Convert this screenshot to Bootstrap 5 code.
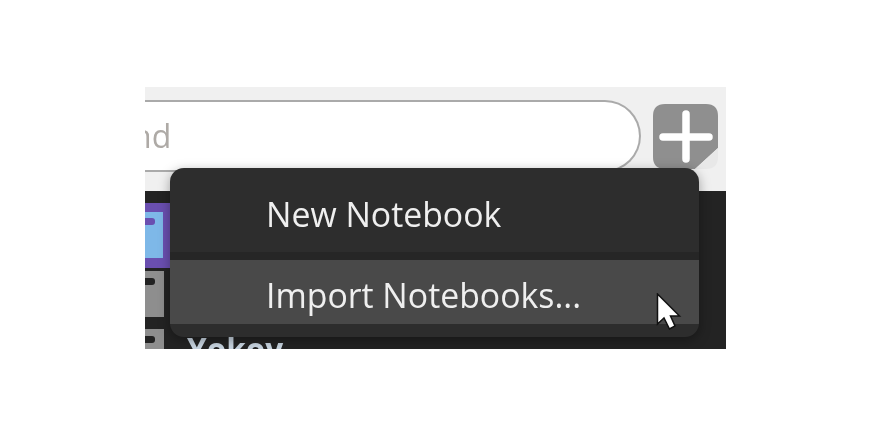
<!DOCTYPE html>
<html lang="en">
<head>
<meta charset="utf-8">
<title>Notebook menu</title>
<link rel="stylesheet" href="https://cdn.jsdelivr.net/npm/bootstrap@5.3.0/dist/css/bootstrap.min.css">
<style>
html,body{height:437px;overflow:hidden;background:#fff}
.stage{margin:87px 0 0 145px;width:581px;height:262px;position:relative;overflow:hidden;font-family:"Open Sans","Noto Sans",sans-serif;background:#232323;filter:blur(.45px)}
.topbar{height:104px;background:#f0f0f0;padding:13px 8px 0 0;align-items:flex-start}
.searchbox{flex:1;height:72px;background:#fff;border:2.5px solid #aaa;border-left:0;border-radius:0 36px 36px 0;color:#aeaaa6;font-size:32px;font-weight:400;line-height:67px;margin-right:12px;overflow:hidden;text-indent:-13px;white-space:nowrap}
.plusbtn{width:65px;height:65px;flex:none;display:block;margin-top:4px}
.sidebar{width:25px;position:absolute;left:0;top:103px;bottom:0}
.thumb-a{position:absolute;left:0;top:13px;width:25px;height:65px;background:#6a4fb0}
.thumb-a i{position:absolute;left:0;top:9px;width:18px;height:46px;background:#7eb8e8}
.thumb-a b{position:absolute;left:0;top:15px;width:10px;height:7px;background:#6a4fb0;border-radius:0 3px 3px 0}
.thumb-b{position:absolute;left:0;width:19px;background:#8e8e8e}
.thumb-b b{position:absolute;left:0;top:7px;width:10px;height:7px;background:#222;border-radius:0 3px 3px 0}
.t1{top:81px;height:46px}
.t2{top:139px;height:30px}
.peek{position:absolute;left:42px;top:244px;font-size:31.500px;font-weight:700;color:#c9d6e2;line-height:36px;margin:0}
.popup{position:absolute;left:25px;top:81px;width:529px;height:169px;background:#2d2d2d;border-radius:14px;box-shadow:0 3px 12px rgba(0,0,0,.35);overflow:hidden;padding:0;margin:0}
.popup .list-group-item{background:transparent;border:0;color:#efefef;font-size:33.8px;line-height:44px;padding:0 0 0 96px;border-radius:0}
.item-new{height:84px;padding-top:24px!important}
.sep{height:8px;background:#262626}
.item-imp{height:64px;background:#494949!important;padding-top:13px!important}
.cursor{position:absolute;left:511px;top:206px;width:26px;height:38px}
</style>
</head>
<body>
<div class="stage">
  <div class="topbar d-flex">
    <div class="searchbox">nd</div>
    <svg class="plusbtn" viewBox="0 0 65 65" aria-label="Add">
      <path d="M12 0H53Q65 0 65 12V44L42 65H12Q0 65 0 53V12Q0 0 12 0Z" fill="#8f8f8f"/>
      <path d="M65 44V53Q65 65 53 65H42Z" fill="#e8e8e8"/>
      <path d="M33 10V55M10 33H56" stroke="#fff" stroke-width="7.5" stroke-linecap="round" fill="none"/>
    </svg>
  </div>
  <div class="sidebar">
    <div class="thumb-a"><i></i><b></b></div>
    <div class="thumb-b t1"><b></b></div>
    <div class="thumb-b t2"><b></b></div>
  </div>
  <p class="peek">Yokoy</p>
  <div class="popup list-group">
    <div class="list-group-item item-new">New Notebook</div>
    <div class="sep"></div>
    <div class="list-group-item item-imp">Import Notebooks...</div>
  </div>
  <svg class="cursor" viewBox="0 0 26 38" aria-hidden="true">
    <path d="M1.5 1V31L8 25L13.500 36L19 33L14.500 23H23.500Z" fill="#fff" stroke="#111" stroke-width="1.5"/>
  </svg>
</div>
<script src="https://cdn.jsdelivr.net/npm/bootstrap@5.3.0/dist/js/bootstrap.bundle.min.js"></script>
</body>
</html>
